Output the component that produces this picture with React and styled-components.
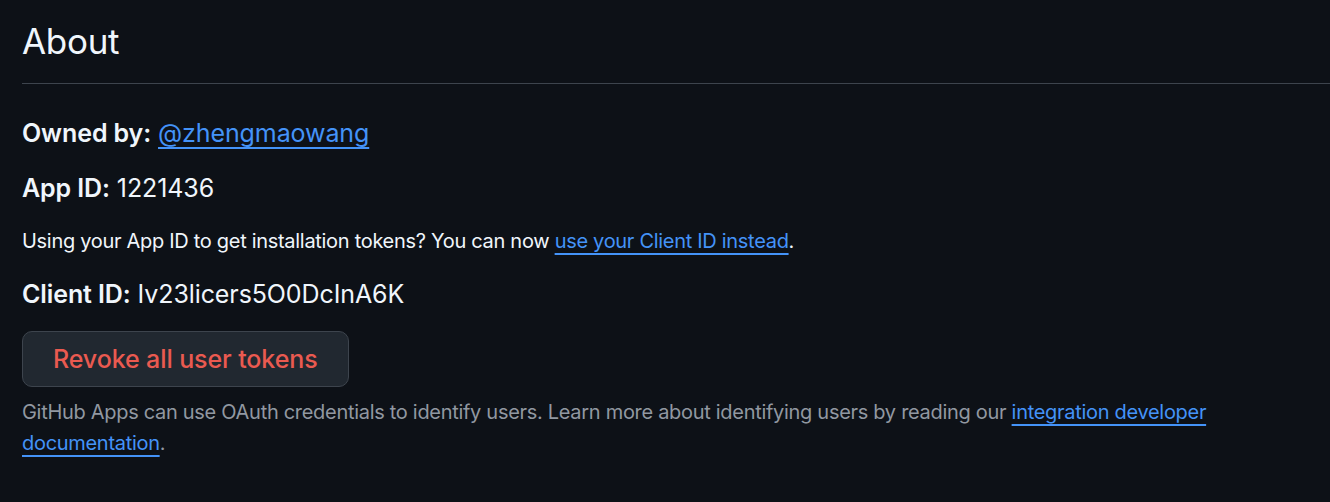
import React from "react";
import styled, { createGlobalStyle } from "styled-components";

const GlobalStyle = createGlobalStyle`
  html, body {
    margin: 0;
    padding: 0;
    background: #0d1117;
  }
  body {
    font-family: Inter, "Noto Sans", "Liberation Sans", sans-serif;
    color: #f0f6fc;
    -webkit-font-smoothing: antialiased;
  }
`;

const Page = styled.div`
  min-height: 502px;
  padding-left: 22px;
  background: #0d1117;
`;

const Subhead = styled.div`
  padding: 19px 0 19px;
  border-bottom: 1px solid #3d444d;
`;

const Heading = styled.h2`
  margin: 0;
  font-size: 35px;
  line-height: 45px;
  font-weight: 400;
  letter-spacing: -0.3px;
`;

const Body = styled.div`
  display: flex;
  flex-direction: column;
  align-items: flex-start;
  padding-top: 31px;
  padding-right: 10px;
`;

const Row = styled.p`
  margin: 0 0 ${(p) => p.$gap || 19}px;
  font-size: ${(p) => (p.$small ? 20 : 25)}px;
  line-height: ${(p) => (p.$small ? "31px" : "36px")};
  letter-spacing: ${(p) => (p.$small ? "-0.3px" : "-0.1px")};
  color: ${(p) => (p.$muted ? "#9198a1" : "#f0f6fc")};
`;

const Label = styled.strong`
  font-weight: 600;
`;

const Link = styled.a`
  color: #4493f8;
  text-decoration: underline;
  text-decoration-thickness: 2px;
  text-underline-offset: 5px;
  cursor: pointer;
`;

const DangerButton = styled.button`
  display: inline-flex;
  align-items: center;
  height: 56px;
  padding: 0 30px;
  margin-bottom: 10px;
  border: 1px solid #3d444d;
  border-radius: 10px;
  background: #212830;
  color: #ea5a50;
  font-family: inherit;
  font-size: 25px;
  font-weight: 500;
  letter-spacing: -0.1px;
  cursor: pointer;
`;

export default function App() {
  return (
    <Page>
      <GlobalStyle />
      <Subhead>
        <Heading>About</Heading>
      </Subhead>
      <Body>
        <Row>
          <Label>Owned by:</Label> <Link>@zhengmaowang</Link>
        </Row>
        <Row $gap={20}>
          <Label>App ID:</Label> 1221436
        </Row>
        <Row $small $gap={19}>
          Using your App ID to get installation tokens? You can now{" "}
          <Link>use your Client ID instead</Link>.
        </Row>
        <Row>
          <Label>Client ID:</Label> Iv23licers5O0DcInA6K
        </Row>
        <DangerButton>Revoke all user tokens</DangerButton>
        <Row $small $muted $gap={0}>
          GitHub Apps can use OAuth credentials to identify users. Learn more
          about identifying users by reading our{" "}
          <Link>integration developer documentation</Link>.
        </Row>
      </Body>
    </Page>
  );
}
